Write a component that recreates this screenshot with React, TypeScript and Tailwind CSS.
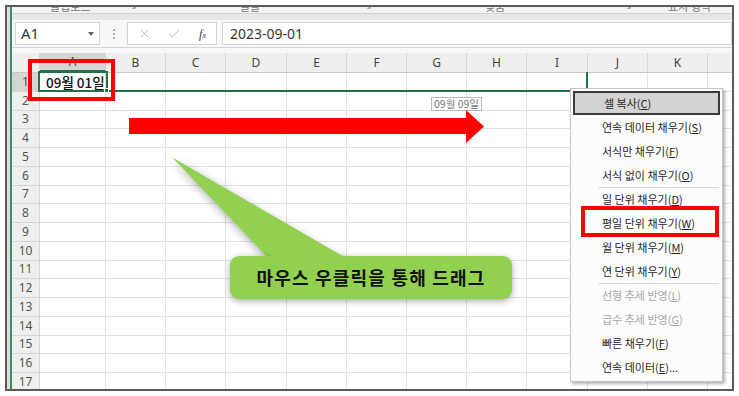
import { X, Check } from "lucide-react";

const COLS = [
  { l: "A", w: 66 },
  { l: "B", w: 60 },
  { l: "C", w: 60 },
  { l: "D", w: 61 },
  { l: "E", w: 60 },
  { l: "F", w: 60 },
  { l: "G", w: 60 },
  { l: "H", w: 60 },
  { l: "I", w: 61 },
  { l: "J", w: 60 },
  { l: "K", w: 60 },
];

const ROWS = Array.from({ length: 17 }, (_, i) => i + 1);

type Item = { t: string; k: string; hl?: boolean; dis?: boolean; more?: boolean } | "sep";

const MENU: Item[] = [
  { t: "셀 복사", k: "C", hl: true },
  { t: "연속 데이터 채우기", k: "S" },
  { t: "서식만 채우기", k: "F" },
  { t: "서식 없이 채우기", k: "O" },
  "sep",
  { t: "일 단위 채우기", k: "D" },
  { t: "평일 단위 채우기", k: "W" },
  { t: "월 단위 채우기", k: "M" },
  { t: "연 단위 채우기", k: "Y" },
  "sep",
  { t: "선형 추세 반영", k: "L", dis: true },
  { t: "급수 추세 반영", k: "G", dis: true },
  { t: "빠른 채우기", k: "F" },
  { t: "연속 데이터", k: "E", more: true },
];

const font = "font-['Noto_Sans_CJK_KR','Noto_Sans',sans-serif]";

export default function App() {
  return (
    <div className={`relative w-[739px] h-[396px] bg-white pt-[5px] pl-[5px] overflow-hidden ${font}`}>
      {/* Excel window frame */}
      <div className="w-[729px] h-[386px] border-2 border-[#5b5b5b] flex overflow-hidden">
        <div className="w-[3px] shrink-0 bg-[#dedede]" />
        <div className="w-[2px] shrink-0 bg-[#3f8f5c]" />
        <div className="flex-1 flex flex-col min-w-0">
          {/* ribbon group labels, only their lower half shows */}
          <div className="h-[6px] bg-[#f3f3f3] overflow-hidden">
            <div className="flex -mt-[7px] text-[11px] leading-[12px] text-[#777] whitespace-nowrap">
              <span className="ml-[38px] w-[78px]">클립보드</span>
              <span className="w-[112px] text-[9px]">↘</span>
              <span className="w-[123px]">글꼴</span>
              <span className="w-[122px] text-[9px]">↘</span>
              <span className="w-[138px]">맞춤</span>
              <span className="w-[45px] text-[9px]">↘</span>
              <span>표시 형식</span>
            </div>
          </div>
          <div className="h-[7px] bg-[#e7e7e7] border-t border-[#d2d2d2]" />
          {/* formula bar */}
          <div className="h-[28px] bg-[#f8f8f8] border-b border-[#d6d6d6] flex items-center">
            <div className="ml-[3px] w-[85px] h-[23px] bg-white border border-[#d4d4d4] flex items-center justify-between pl-[5px] pr-[5px]">
              <span className="text-[15px] text-[#333] font-['Noto_Sans',sans-serif]">A1</span>
              <span className="w-0 h-0 border-l-[3.5px] border-r-[3.5px] border-t-[4px] border-l-transparent border-r-transparent border-t-[#666]" />
            </div>
            <div className="w-[27px] flex flex-col items-center gap-[2px]">
              <span className="w-[2px] h-[2px] bg-[#b0b0b0]" />
              <span className="w-[2px] h-[2px] bg-[#b0b0b0]" />
              <span className="w-[2px] h-[2px] bg-[#b0b0b0]" />
            </div>
            <div className="w-[90px] h-[23px] bg-white border border-[#d4d4d4] flex items-center">
              <X size={13} strokeWidth={1.4} className="ml-[10px] text-[#a8a8a8]" />
              <Check size={14} strokeWidth={1.4} className="ml-[16px] text-[#a8a8a8]" />
              <span className="ml-[18px] text-[12px] italic text-[#444] font-['Liberation_Serif',serif]">
                f<span className="text-[9px]">x</span>
              </span>
            </div>
            <div className="ml-[5px] flex-1 h-[23px] bg-white border border-[#d4d4d4] flex items-center pl-[7px]">
              <span className="text-[14px] text-[#333] font-['Noto_Sans',sans-serif]">2023-09-01</span>
            </div>
          </div>
          <div className="h-[5px] bg-[#f8f8f8]" />
          {/* column headers */}
          <div className="h-[20px] flex bg-[#efefef] border-b border-[#c9c9c9] font-['Noto_Sans',sans-serif]">
            <div className="w-[28px] shrink-0 border-r border-[#d5d5d5]" />
            {COLS.map((c) => (
              <div
                key={c.l}
                style={{ width: c.w }}
                className={`shrink-0 border-r border-[#d5d5d5] flex items-center justify-center text-[12px] text-[#444] ${
                  c.l === "A" ? "bg-[#d4d4d4] border-b-2 border-b-[#217346]" : ""
                }`}
              >
                {c.l}
              </div>
            ))}
            <div className="flex-1" />
          </div>
          {/* rows */}
          <div className="flex-1 overflow-hidden font-['Noto_Sans',sans-serif]">
            {ROWS.map((r) => (
              <div key={r} className="h-[18.75px] flex">
                <div
                  className={`w-[28px] shrink-0 border-b border-r border-[#d5d5d5] flex items-center justify-center text-[12px] text-[#555] ${
                    r === 1 ? "bg-[#d4d4d4]" : "bg-[#efefef]"
                  }`}
                >
                  {r}
                </div>
                {COLS.map((c) => (
                  <div
                    key={c.l}
                    style={{ width: c.w }}
                    className="shrink-0 border-r border-b border-[#e1e1e1] flex items-center"
                  >
                    {r === 1 && c.l === "A" && (
                      <span className={`ml-[6px] text-[13.5px] font-medium text-[#111] whitespace-nowrap ${font}`}>
                        09월 01일
                      </span>
                    )}
                  </div>
                ))}
                <div className="flex-1 border-b border-[#e1e1e1]" />
              </div>
            ))}
          </div>
        </div>
      </div>

      {/* drag range + active cell */}
      <div className="absolute left-[40px] top-[72px] w-[548px] h-[20px] border-r-2 border-b-2 border-[#217346]" />
      <div className="absolute left-[38px] top-[71px] w-[70px] h-[21px] border-2 border-[#217346]" />
      <div className="absolute left-[104px] top-[88px] w-[5px] h-[5px] bg-[#217346] border border-white" />

      {/* red highlight on A1 */}
      <div className="absolute left-[28px] top-[59px] w-[87px] h-[42px] border-4 border-[#ff0000]" />

      {/* drag tooltip */}
      <div className="absolute left-[431px] top-[97px] px-[2px] h-[14px] border border-[#b8b8b8] bg-white text-[10.5px] leading-[12px] text-[#777]">
        09월 09일
      </div>

      {/* red arrow */}
      <svg className="absolute left-0 top-0" width="739" height="396" viewBox="0 0 739 396">
        <polygon points="129,118 466,118 466,110 484,126.5 466,143 466,134 129,134" fill="#ff0000" />
      </svg>

      {/* callout */}
      <svg
        className="absolute left-0 top-0 [filter:drop-shadow(0_2px_5px_rgba(0,0,0,0.35))]"
        width="739"
        height="396"
        viewBox="0 0 739 396"
      >
        <polygon points="173,158 272,262 348,262" fill="#92d050" />
      </svg>
      <div className="absolute left-[230px] top-[256px] w-[282px] h-[43px] rounded-[9px] bg-[#92d050] shadow-[0_2px_7px_rgba(0,0,0,0.35)] flex items-center justify-center">
        <span className="text-[18px] font-bold text-[#111] tracking-[1.2px]">마우스 우클릭을 통해 드래그</span>
      </div>
      <svg className="absolute left-0 top-0" width="739" height="396" viewBox="0 0 739 396">
        <polygon points="173,158 274,258 346,258" fill="#92d050" />
      </svg>

      {/* context menu */}
      <div className="absolute left-[570px] top-[88px] w-[153px] h-[294px] bg-[#fcfcfc] border border-[#c6c6c6] shadow-[2px_2px_3px_rgba(0,0,0,0.3)] p-[2px] flex flex-col">
        {MENU.map((m, i) =>
          m === "sep" ? (
            <div key={i} className="ml-[25px] mr-[1px] h-px -mb-px bg-[#d9d9d9] relative" />
          ) : (
            <div
              key={i}
              className={`h-[24px] shrink-0 flex items-center pl-[29px] text-[11px] whitespace-nowrap ${
                m.hl ? "bg-[#d3d3d3] border-2 border-[#3a3a3a] pl-[27px]" : ""
              } ${m.dis ? "text-[#a6a6a6]" : "text-[#262626]"}`}
            >
              {m.t}(<span className="underline">{m.k}</span>){m.more ? "..." : ""}
            </div>
          )
        )}
      </div>
      {/* red highlight on menu item */}
      <div className="absolute left-[581px] top-[206px] w-[138px] h-[31px] border-4 border-[#ff0000]" />
    </div>
  );
}
